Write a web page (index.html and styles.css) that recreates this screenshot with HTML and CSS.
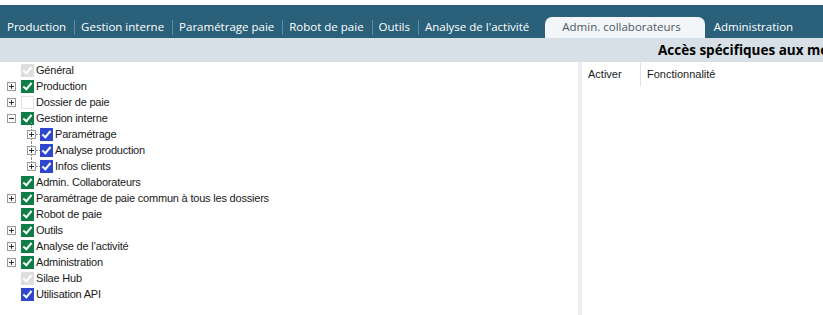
FILE: index.html
```html
<!DOCTYPE html>
<html lang="fr">
  <head>
    <meta charset="UTF-8" />
    <title>Admin. collaborateurs</title>
    <link rel="stylesheet" href="styles.css">
  </head>
  <body>
    <div id="topStrip"></div>

    <nav id="menuBar">
      <span class="menu-item">Production</span>
      <span class="menu-item">Gestion interne</span>
      <span class="menu-item">Paramétrage paie</span>
      <span class="menu-item">Robot de paie</span>
      <span class="menu-item">Outils</span>
      <span class="menu-item">Analyse de l'activité</span>
      <span class="menu-item active">Admin. collaborateurs</span>
      <span class="menu-item">Administration</span>
    </nav>

    <div id="titleBand">
      <h1 id="titleText">Accès spécifiques aux menus</h1>
    </div>

    <main id="content">
      <ul id="tree">
        <li class="row"><span class="exp none"></span><span class="chk off-dis"></span>Général</li>
        <li class="row"><span class="exp plus"></span><span class="chk green"></span>Production</li>
        <li class="row"><span class="exp plus"></span><span class="chk empty"></span>Dossier de paie</li>
        <li class="row"><span class="exp minus"></span><span class="chk green"></span>Gestion interne</li>
        <li class="row sub first"><span class="exp plus"></span><span class="dots"></span><span class="chk blue"></span>Paramétrage</li>
        <li class="row sub"><span class="exp plus"></span><span class="dots"></span><span class="chk blue"></span>Analyse production</li>
        <li class="row sub last"><span class="exp plus"></span><span class="dots"></span><span class="chk blue"></span>Infos clients</li>
        <li class="row"><span class="exp none"></span><span class="chk green"></span>Admin. Collaborateurs</li>
        <li class="row"><span class="exp plus"></span><span class="chk green"></span>Paramétrage de paie commun à tous les dossiers</li>
        <li class="row"><span class="exp none"></span><span class="chk green"></span>Robot de paie</li>
        <li class="row"><span class="exp plus"></span><span class="chk green"></span>Outils</li>
        <li class="row"><span class="exp plus"></span><span class="chk green"></span>Analyse de l’activité</li>
        <li class="row"><span class="exp plus"></span><span class="chk green"></span>Administration</li>
        <li class="row"><span class="exp none"></span><span class="chk off-dis"></span>Silae Hub</li>
        <li class="row"><span class="exp none"></span><span class="chk blue"></span>Utilisation API</li>
      </ul>

      <div id="splitter"></div>

      <section id="grid">
        <div class="grid-head">
          <span class="col col-activer">Activer</span>
          <span class="col col-fonc">Fonctionnalité</span>
        </div>
      </section>
    </main>
  </body>
</html>
```

FILE: styles.css
```css
* {
  margin: 0;
  padding: 0;
  box-sizing: border-box;
}

body {
  width: 823px;
  height: 315px;
  overflow: hidden;
  background-color: white;
  font-family: "Liberation Sans", Arial, sans-serif;
  display: flex;
  flex-direction: column;
}

#topStrip {
  height: 5px;
  background-color: white;
}

#menuBar {
  height: 33px;
  background-color: #2a6079;
  display: flex;
  align-items: flex-end;
  font-family: "Open Sans", sans-serif;
  font-size: 11.5px;
  white-space: nowrap;
}

.menu-item {
  height: 21px;
  line-height: 20px;
  padding: 0 8px 0 7px;
  color: white;
  position: relative;
}

.menu-item + .menu-item::before {
  content: "";
  position: absolute;
  left: 0;
  top: 3px;
  height: 15px;
  width: 1px;
  background-color: #5d8ba1;
}

.menu-item.active {
  background-color: #f3f6f9;
  color: #4d5866;
  border-radius: 7px 7px 0 0;
  padding: 0 24px 0 17px;
  margin: 0 2px 0 8px;
}

.menu-item.active::before,
.menu-item.active + .menu-item::before {
  display: none;
}

#titleBand {
  height: 24px;
  background-color: #d6e0e6;
  padding-left: 658px;
  overflow: hidden;
  white-space: nowrap;
}

#titleText {
  font-family: "Open Sans", sans-serif;
  font-size: 13.5px;
  font-weight: bold;
  line-height: 24px;
  color: black;
}

#content {
  flex: 1;
  display: flex;
}

#tree {
  list-style: none;
  width: 578px;
  font-size: 11px;
  letter-spacing: -0.2px;
  color: #1a1a1a;
}

.row {
  height: 16px;
  display: flex;
  align-items: center;
  padding-left: 7px;
  position: relative;
}

.exp {
  width: 9px;
  height: 9px;
  margin-right: 5px;
  position: relative;
  flex-shrink: 0;
}

.exp.plus,
.exp.minus {
  border: 1px solid #9a9a9a;
  background-color: #fbfbfb;
}

.exp.plus::before,
.exp.minus::before {
  content: "";
  position: absolute;
  left: 1px;
  top: 3px;
  width: 5px;
  height: 1px;
  background-color: #333;
}

.exp.plus::after {
  content: "";
  position: absolute;
  left: 3px;
  top: 1px;
  width: 1px;
  height: 5px;
  background-color: #333;
}

.chk {
  width: 13px;
  height: 13px;
  margin-right: 2px;
  flex-shrink: 0;
  position: relative;
}

.chk::after {
  content: "";
  position: absolute;
  left: 4px;
  top: 1px;
  width: 3px;
  height: 7px;
  border-right: 2px solid white;
  border-bottom: 2px solid white;
  transform: rotate(40deg);
}

.chk.green {
  background-color: #0f7d47;
}

.chk.blue {
  background-color: #2f47cc;
}

.chk.off-dis {
  background-color: #dedede;
}

.chk.empty {
  background-color: white;
  border: 1px solid #e2e2e2;
}

.chk.empty::after {
  display: none;
}

/* second level of the tree */
.row.sub {
  padding-left: 27px;
}

.row.sub .exp {
  margin-right: 0;
}

.dots {
  width: 4px;
  height: 1px;
  border-top: 1px dotted #8a8a8a;
}

.row.sub::before {
  content: "";
  position: absolute;
  left: 31px;
  top: 0;
  height: 16px;
  border-left: 1px dotted #8a8a8a;
}

.row.sub.first::before {
  top: -4px;
  height: 20px;
}

.row.sub.last::before {
  height: 4px;
}

#splitter {
  width: 4px;
  background-color: #ededed;
}

#grid {
  flex: 1;
}

.grid-head {
  display: flex;
  height: 24px;
  font-size: 11px;
  color: #1a1a1a;
}

.col {
  line-height: 24px;
}

.col-activer {
  width: 59px;
  padding-left: 6px;
  border-right: 1px solid #e2e2e2;
}

.col-fonc {
  padding-left: 6px;
}
```
